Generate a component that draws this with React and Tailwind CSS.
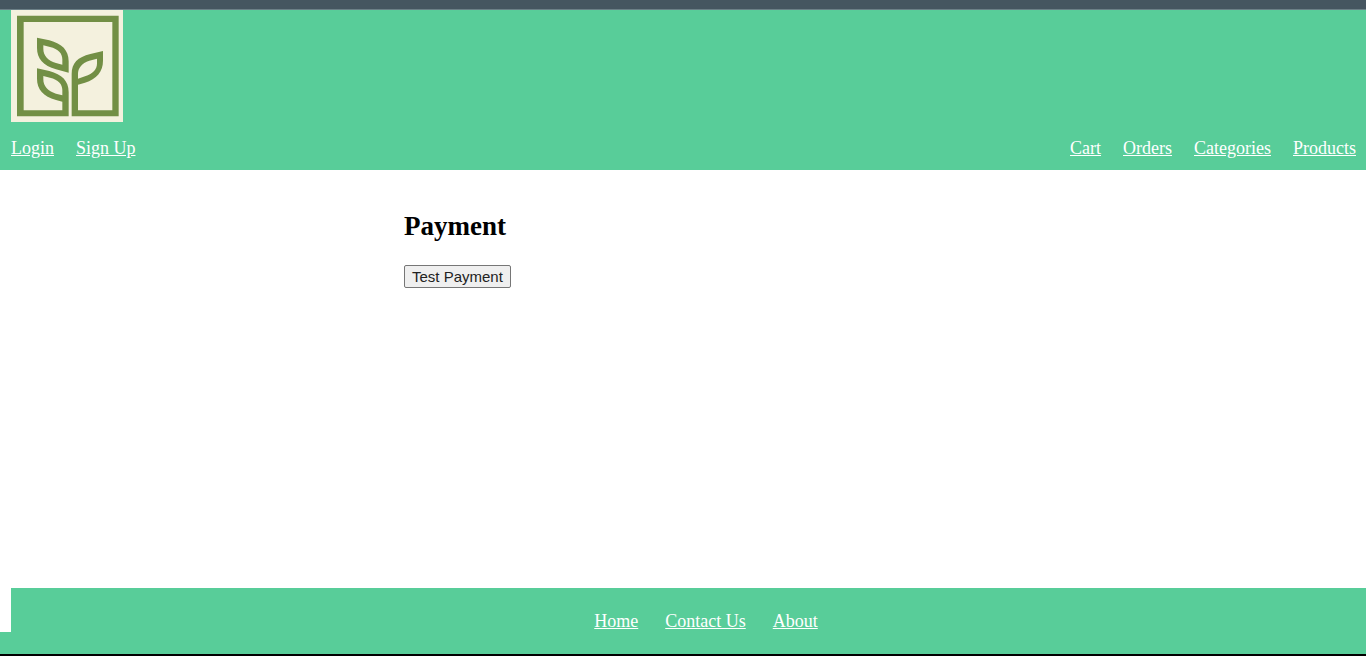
const accountLinks = ["Login", "Sign Up"];
const shopLinks = ["Cart", "Orders", "Categories", "Products"];
const footerLinks = ["Home", "Contact Us", "About"];

function LinkList({ links, label, className }) {
  return (
    <nav aria-label={label}>
      <ul className={`flex flex-wrap text-[18px] leading-5 text-white ${className}`}>
        {links.map((link) => (
          <li key={link}>
            <a href="#" className="underline">{link}</a>
          </li>
        ))}
      </ul>
    </nav>
  );
}

function Logo() {
  return (
    <svg viewBox="33 30 336 336" className="block size-28" role="img" aria-label="Plant logo">
      <rect x="33" y="30" width="336" height="336" fill="#f4f1de" />
      <g fill="#728f45" fillRule="evenodd">
        <path d="M51 47H356V349H215V222C215 190 233 171 271 162L309 153V182C309 215 290 237 255 248L234 254V331H337V66H71V331H187V305L168 300C130 289 111 268 111 236V205L148 213C186 223 206 243 206 276V349H51ZM130 228V238C130 258 143 273 168 281L187 286V270C187 252 175 239 150 233ZM291 176L268 182C245 190 234 204 234 222V236L255 229C280 221 291 208 291 190Z" />
        <path d="M111 113L148 121C186 131 206 151 206 184V218L168 208C130 197 111 176 111 144ZM130 136V146C130 166 143 181 168 189L187 194V178C187 160 175 147 150 141Z" />
      </g>
    </svg>
  );
}

export default function App() {
  return (
    <div className="flex min-h-screen flex-col border-b-2 border-black bg-white font-['Liberation_Serif','Times_New_Roman',serif] text-black">
      <div className="h-2.5 border-b border-[#6c8087] bg-[#455660]" />
      <header className="bg-[#58cd99] pr-2.5 pb-3 pl-[11px]">
        <a href="#" className="inline-block align-top">
          <Logo />
        </a>
        <div className="mt-4 flex justify-between">
          <LinkList links={accountLinks} label="Account" className="gap-[22px]" />
          <LinkList links={shopLinks} label="Shop" className="gap-[22px]" />
        </div>
      </header>
      <main className="mx-auto w-full max-w-[558px] flex-1 pt-[41px]">
        <h2 className="text-[27px] leading-[30px] font-bold">Payment</h2>
        <button
          type="button"
          className="mt-6 block rounded-[2px] border border-[#767676] bg-[#efefef] px-[7px] py-px font-['Liberation_Sans',Arial,sans-serif] text-[15px] leading-[19px] text-[#222222]"
        >
          Test Payment
        </button>
      </main>
      <footer>
        <div className="ml-[11px] flex justify-center bg-[#58cd99] pt-[23px] pb-px pl-[35px]">
          <LinkList links={footerLinks} label="Footer" className="gap-[27px]" />
        </div>
        <div className="h-[22px] bg-[#58cd99]" />
      </footer>
    </div>
  );
}
